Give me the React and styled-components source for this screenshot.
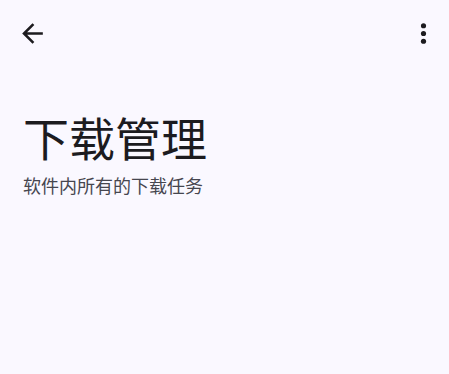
import React from 'react';
import styled, {createGlobalStyle} from 'styled-components';

const GlobalStyle = createGlobalStyle`
  html, body {
    margin: 0;
    padding: 0;
    background: #faf8ff;
  }
  body {
    font-family: "Noto Sans CJK SC", "Noto Sans", Roboto, sans-serif;
  }
`

const Page = styled.div`
  width: 449px;
  height: 374px;
  background: #faf8ff;
  display: flex;
  flex-direction: column;
`

const TopBar = styled.div`
  height: 66px;
  display: flex;
  align-items: center;
  justify-content: space-between;
  padding: 0 10px 0 16px;
`

const IconButton = styled.button`
  width: 32px;
  height: 32px;
  padding: 0;
  border: none;
  background: transparent;
  display: flex;
  align-items: center;
  justify-content: center;
  color: #1c1b1f;
  cursor: pointer;

  & svg {
    width: 31px;
    height: 31px;
    fill: currentColor;
  }
`

const Header = styled.div`
  padding: 42px 24px 0 23px;
  display: flex;
  flex-direction: column;
`

const Title = styled.h1`
  margin: 0;
  font-size: 46px;
  font-weight: 400;
  line-height: 56px;
  color: #1c1b1f;
`

const Subtitle = styled.p`
  margin: 9px 0 0;
  font-size: 18px;
  line-height: 24px;
  color: #46464f;
`

const BackIcon = () => (
    <svg viewBox="0 0 24 24">
        <path d="M20 11H7.83l5.59-5.59L12 4l-8 8 8 8 1.41-1.41L7.83 13H20v-2z"/>
    </svg>
)

const MoreIcon = () => (
    <svg viewBox="0 0 24 24">
        <circle cx="12" cy="6" r="2"/>
        <circle cx="12" cy="12" r="2"/>
        <circle cx="12" cy="18" r="2"/>
    </svg>
)

export default function App() {
    return (
        <Page>
            <GlobalStyle/>
            <TopBar>
                <IconButton aria-label="back"><BackIcon/></IconButton>
                <IconButton aria-label="more"><MoreIcon/></IconButton>
            </TopBar>
            <Header>
                <Title>下载管理</Title>
                <Subtitle>软件内所有的下载任务</Subtitle>
            </Header>
        </Page>
    );
}
